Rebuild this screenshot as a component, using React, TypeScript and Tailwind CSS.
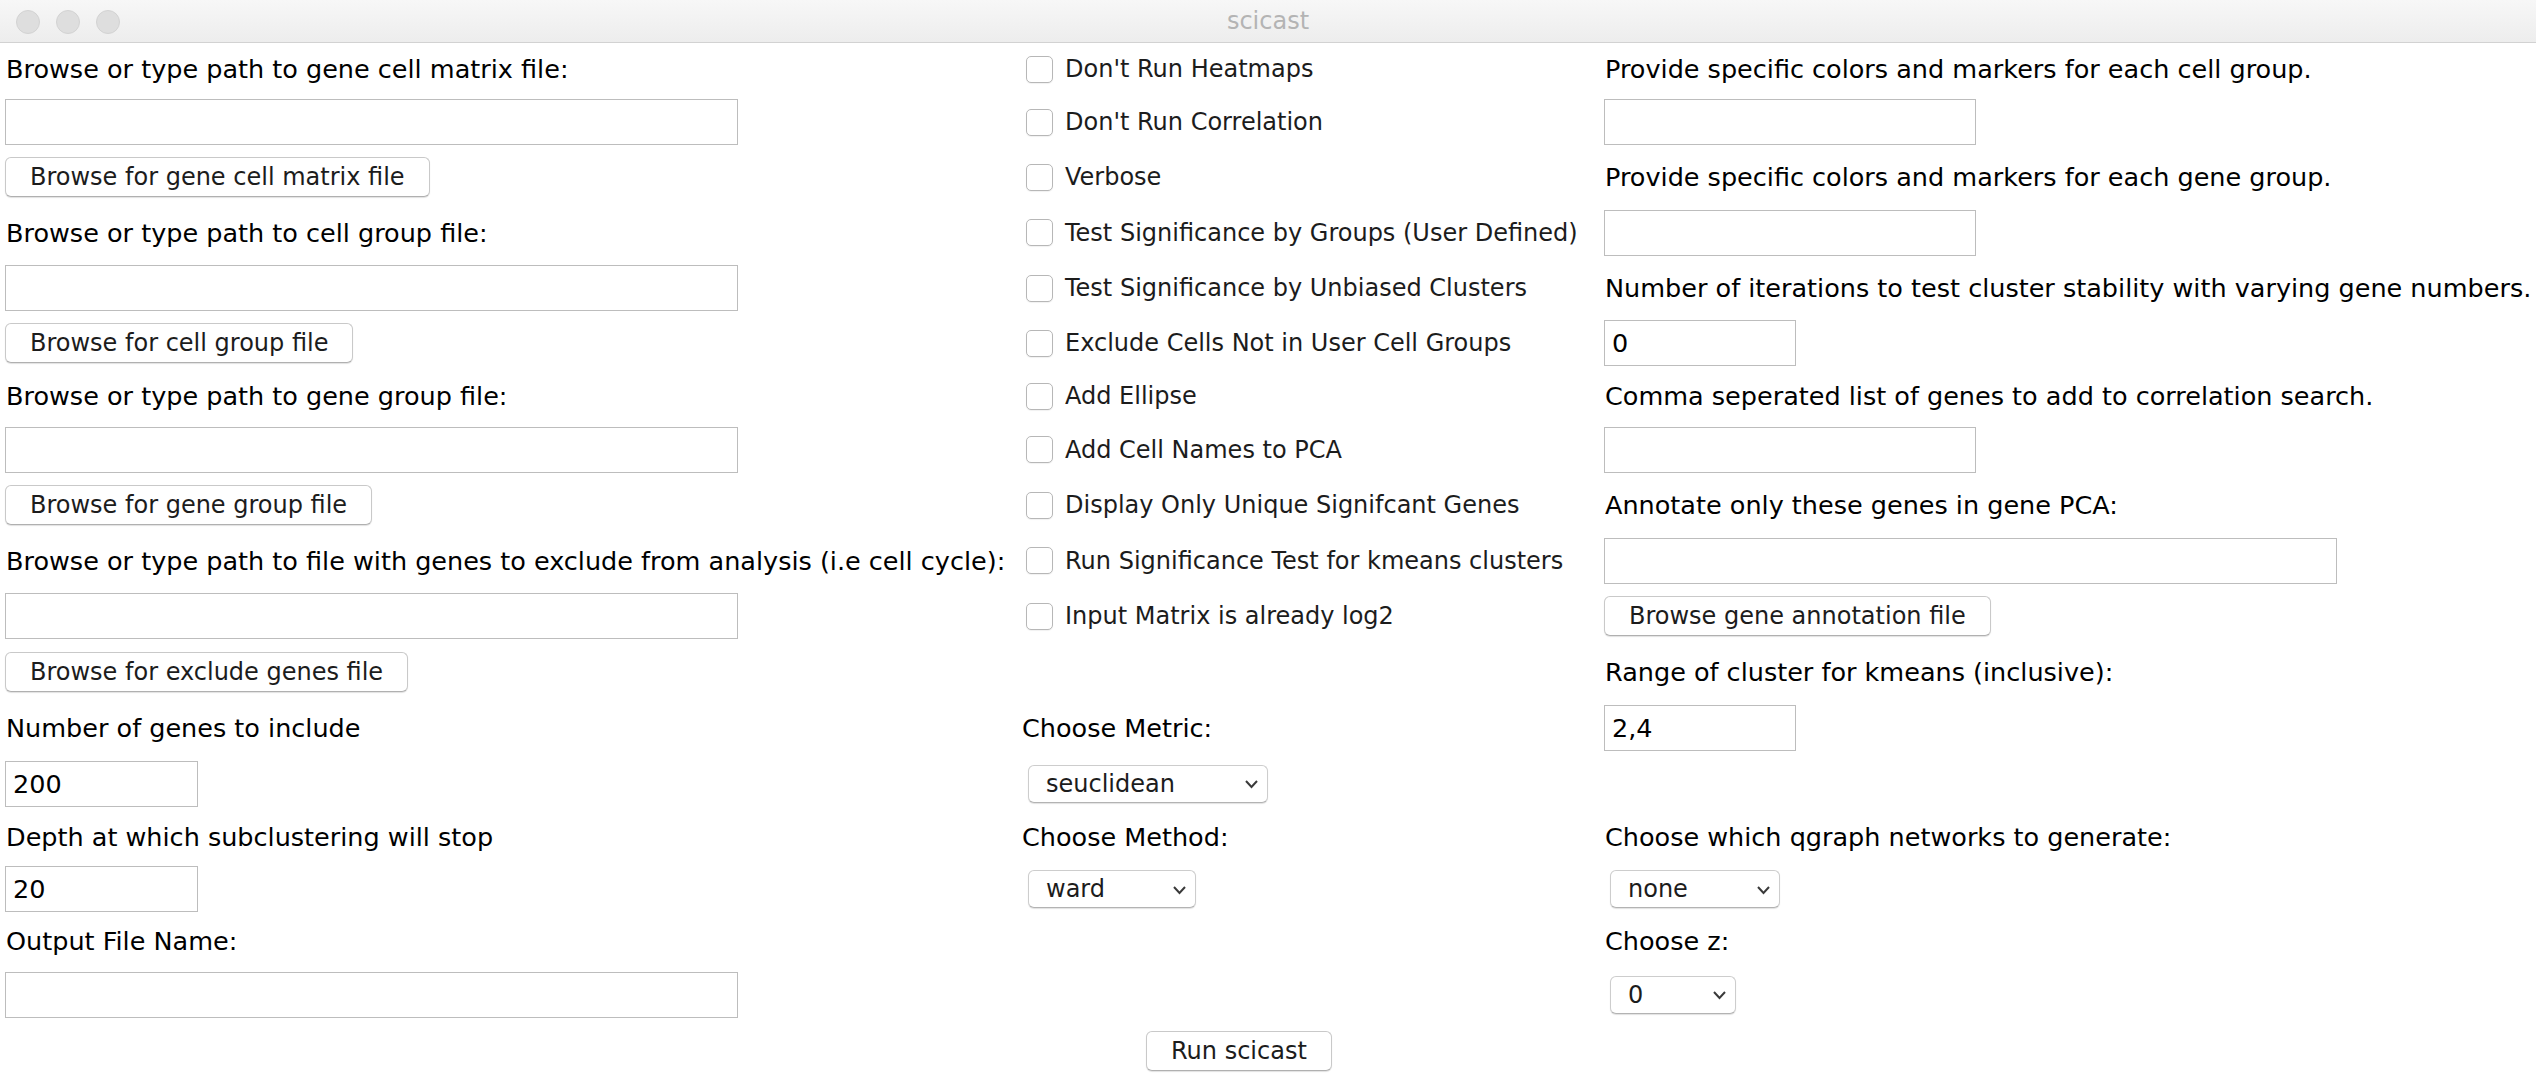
import React from 'react';

const font = "font-['DejaVu_Sans',_'Liberation_Sans',_sans-serif]";

const Label: React.FC<{ className?: string; children: React.ReactNode }> = ({ className = '', children }) => (
  <div className={`self-center whitespace-nowrap text-[25.5px] leading-[30px] text-black ${className}`}>{children}</div>
);

const Entry: React.FC<{ className?: string; value?: string }> = ({ className = '', value = '' }) => (
  <div className={`self-center h-[46px] border border-[#bdbdbd] bg-white pl-[7px] text-[25.5px] leading-[44px] text-black ${className}`}>
    {value}
  </div>
);

const Button: React.FC<{ className?: string; children: React.ReactNode }> = ({ className = '', children }) => (
  <div
    className={`self-center justify-self-start flex h-[40px] items-center rounded-[6px] border border-[#c9c9c9] border-b-[#b0b0b0] bg-white px-[24px] text-[24px] text-[#1c1c1c] shadow-[0_1px_1px_rgba(0,0,0,0.12)] whitespace-nowrap ${className}`}
  >
    {children}
  </div>
);

const Check: React.FC<{ className?: string; children: React.ReactNode }> = ({ className = '', children }) => (
  <div className={`self-center flex items-center gap-[12px] pl-[14px] text-[24px] text-[#1c1c1c] whitespace-nowrap ${className}`}>
    <span className="h-[27px] w-[27px] shrink-0 rounded-[5px] border border-[#b7b7b7] bg-white shadow-[0_1px_1px_rgba(0,0,0,0.06)]" />
    <span>{children}</span>
  </div>
);

const Select: React.FC<{ className?: string; value: string }> = ({ className = '', value }) => (
  <div
    className={`self-center justify-self-start flex h-[38px] items-center justify-between rounded-[6px] border border-[#cdcdcd] border-b-[#b3b3b3] bg-white pl-[17px] pr-[8px] text-[24px] text-[#1c1c1c] shadow-[0_1px_1px_rgba(0,0,0,0.12)] ${className}`}
  >
    <span>{value}</span>
    <svg width="15" height="10" viewBox="0 0 15 10" className="mt-[1px]">
      <polyline points="2,2 7.5,8 13,2" fill="none" stroke="#3a3a3a" strokeWidth="2" />
    </svg>
  </div>
);

export default function App() {
  return (
    <div className={`h-[1080px] w-[2536px] overflow-hidden bg-white ${font}`}>
      {/* title bar */}
      <div className="relative flex h-[43px] items-center justify-center border-b border-[#d2d2d2] bg-gradient-to-b from-[#f7f7f7] to-[#ededed]">
        <div className="absolute left-[16px] top-[10px] flex gap-[16px]">
          <span className="h-[24px] w-[24px] rounded-full border border-[#d3d3d3] bg-[#dedede]" />
          <span className="h-[24px] w-[24px] rounded-full border border-[#d3d3d3] bg-[#dedede]" />
          <span className="h-[24px] w-[24px] rounded-full border border-[#d3d3d3] bg-[#dedede]" />
        </div>
        <span className="text-[24px] text-[#b4b4b4]">scicast</span>
      </div>

      <div className="grid grid-cols-[1012px_592px_1fr] grid-rows-[52px_54px_56px_55px_56px_54px_52px_55px_56px_55px_56px_56px_56px_55px_52px_52px_52px_55px_58px]">
        {/* left column */}
        <Label className="col-start-1 row-start-1 pl-[6px]">Browse or type path to gene cell matrix file:</Label>
        <Entry className="col-start-1 row-start-2 ml-[5px] w-[733px]" />
        <Button className="col-start-1 row-start-3 ml-[5px]">Browse for gene cell matrix file</Button>
        <Label className="col-start-1 row-start-4 pl-[6px]">Browse or type path to cell group file:</Label>
        <Entry className="col-start-1 row-start-5 ml-[5px] w-[733px]" />
        <Button className="col-start-1 row-start-6 ml-[5px]">Browse for cell group file</Button>
        <Label className="col-start-1 row-start-7 pl-[6px]">Browse or type path to gene group file:</Label>
        <Entry className="col-start-1 row-start-8 ml-[5px] w-[733px]" />
        <Button className="col-start-1 row-start-9 ml-[5px]">Browse for gene group file</Button>
        <Label className="col-start-1 row-start-10 pl-[6px]">
          Browse or type path to file with genes to exclude from analysis (i.e cell cycle):
        </Label>
        <Entry className="col-start-1 row-start-11 ml-[5px] w-[733px]" />
        <Button className="col-start-1 row-start-12 ml-[5px]">Browse for exclude genes file</Button>
        <Label className="col-start-1 row-start-13 pl-[6px]">Number of genes to include</Label>
        <Entry className="col-start-1 row-start-14 ml-[5px] w-[193px]" value="200" />
        <Label className="col-start-1 row-start-15 pl-[6px]">Depth at which subclustering will stop</Label>
        <Entry className="col-start-1 row-start-16 ml-[5px] w-[193px]" value="20" />
        <Label className="col-start-1 row-start-17 pl-[6px]">Output File Name:</Label>
        <Entry className="col-start-1 row-start-18 ml-[5px] w-[733px]" />

        {/* middle column */}
        <Check className="col-start-2 row-start-1">Don't Run Heatmaps</Check>
        <Check className="col-start-2 row-start-2">Don't Run Correlation</Check>
        <Check className="col-start-2 row-start-3">Verbose</Check>
        <Check className="col-start-2 row-start-4">Test Significance by Groups (User Defined)</Check>
        <Check className="col-start-2 row-start-5">Test Significance by Unbiased Clusters</Check>
        <Check className="col-start-2 row-start-6">Exclude Cells Not in User Cell Groups</Check>
        <Check className="col-start-2 row-start-7">Add Ellipse</Check>
        <Check className="col-start-2 row-start-8">Add Cell Names to PCA</Check>
        <Check className="col-start-2 row-start-9">Display Only Unique Signifcant Genes</Check>
        <Check className="col-start-2 row-start-10">Run Significance Test for kmeans clusters</Check>
        <Check className="col-start-2 row-start-11">Input Matrix is already log2</Check>
        <Label className="col-start-2 row-start-13 pl-[10px]">Choose Metric:</Label>
        <Select className="col-start-2 row-start-14 ml-[16px] w-[240px]" value="seuclidean" />
        <Label className="col-start-2 row-start-15 pl-[10px]">Choose Method:</Label>
        <Select className="col-start-2 row-start-16 ml-[16px] w-[168px]" value="ward" />
        <Button className="col-start-2 row-start-19 ml-[134px]">Run scicast</Button>

        {/* right column */}
        <Label className="col-start-3 row-start-1 pl-[1px]">Provide specific colors and markers for each cell group.</Label>
        <Entry className="col-start-3 row-start-2 w-[372px]" />
        <Label className="col-start-3 row-start-3 pl-[1px]">Provide specific colors and markers for each gene group.</Label>
        <Entry className="col-start-3 row-start-4 w-[372px]" />
        <Label className="col-start-3 row-start-5 pl-[1px]">
          Number of iterations to test cluster stability with varying gene numbers.
        </Label>
        <Entry className="col-start-3 row-start-6 w-[192px]" value="0" />
        <Label className="col-start-3 row-start-7 pl-[1px]">Comma seperated list of genes to add to correlation search.</Label>
        <Entry className="col-start-3 row-start-8 w-[372px]" />
        <Label className="col-start-3 row-start-9 pl-[1px]">Annotate only these genes in gene PCA:</Label>
        <Entry className="col-start-3 row-start-10 w-[733px]" />
        <Button className="col-start-3 row-start-11">Browse gene annotation file</Button>
        <Label className="col-start-3 row-start-12 pl-[1px]">Range of cluster for kmeans (inclusive):</Label>
        <Entry className="col-start-3 row-start-13 w-[192px]" value="2,4" />
        <Label className="col-start-3 row-start-15 pl-[1px]">Choose which qgraph networks to generate:</Label>
        <Select className="col-start-3 row-start-16 ml-[6px] w-[170px]" value="none" />
        <Label className="col-start-3 row-start-17 pl-[1px]">Choose z:</Label>
        <Select className="col-start-3 row-start-18 ml-[6px] w-[126px]" value="0" />
      </div>
    </div>
  );
}
